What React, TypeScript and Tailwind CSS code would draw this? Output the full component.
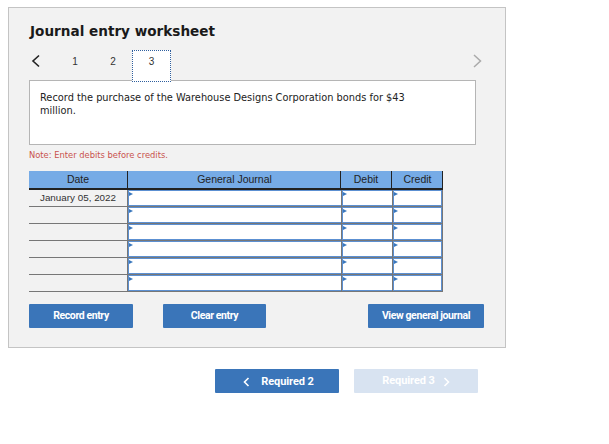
import React from "react";

const rows = [0, 1, 2, 3, 4, 5];

function InputCell({ className, last }: { className: string; last?: boolean }) {
  return (
    <div className={`h-[17px] bg-white border-b border-b-[#777] border-l border-l-[#777] ${last ? "border-r border-r-[#777]" : ""} ${className}`}>
      <div className={`relative h-full border-y border-l border-[#5c90d2] ${last ? "border-r" : ""}`}>
        <span className="absolute left-0 top-[1px] w-0 h-0 border-y-[2.5px] border-y-transparent border-l-[4px] border-l-[#3a77bd]" />
      </div>
    </div>
  );
}

function Btn({ w, ml, children }: { w: string; ml?: string; children: React.ReactNode }) {
  return (
    <button className={`${w} ${ml ?? ""} h-6 rounded-[1px] bg-[#3a75b9] text-white text-[10.5px] font-bold font-['Roboto',sans-serif] tracking-[-0.4px]`}>
      {children}
    </button>
  );
}

export default function App() {
  return (
    <div className="w-[609px] h-[444px] bg-white overflow-hidden">
      <div className="ml-2 mt-[7px] w-[498px] h-[341px] border border-[#c4c4c4] bg-[#f2f2f2] pl-5 pr-[29px] pt-[14px] font-['DejaVu_Sans',sans-serif]">
        <h1 className="ml-px text-[13.6px] leading-[18px] font-bold text-[#1a1a1a]">Journal entry worksheet</h1>
        <div className="flex items-start h-[30px] mt-[10px]">
          <svg width="10" height="14" viewBox="0 0 10 14" className="ml-[2px] mt-[4px]" fill="none" stroke="#222" strokeWidth="1.6">
            <path d="M8 1.5 2 7l6 5.5" />
          </svg>
          <span className="ml-[29px] mt-[6px] w-[10px] text-center text-[10px] leading-3 text-[#333] font-['Liberation_Sans',sans-serif]">1</span>
          <span className="ml-[28px] mt-[6px] w-[10px] text-center text-[10px] leading-3 text-[#333] font-['Liberation_Sans',sans-serif]">2</span>
          <span className="ml-[14px] w-[39px] h-[32px] border border-dotted border-[#2f5f9e] bg-white text-center text-[10px] leading-[22px] text-[#333] font-['Liberation_Sans',sans-serif] relative z-10">3</span>
          <svg width="10" height="14" viewBox="0 0 10 14" className="ml-auto mt-[4px] mr-[-6px]" fill="none" stroke="#aaa" strokeWidth="1.5">
            <path d="M2 1 8.5 7 2 13" />
          </svg>
        </div>
        <div className="w-[447px] h-[65px] border border-[#b5b5b5] bg-white pl-[10px] pr-[60px] pt-[10px] text-[9.8px] leading-[13px] text-[#222]">
          Record the purchase of the Warehouse Designs Corporation bonds for $43 million.
        </div>
        <p className="mt-[4px] text-[8.35px] leading-3 text-[#c9524e]">Note: Enter debits before credits.</p>
        <div className="mt-[10px] w-[414px] font-['Liberation_Sans',sans-serif]">
          <div className="flex h-[19px] bg-[#76abe6] border-b-[2px] border-[#222] text-[10.5px] leading-[16px] text-[#222] text-center">
            <div className="w-[99px] border-r border-[#222]">Date</div>
            <div className="w-[213px] pl-px border-r border-[#222]">General Journal</div>
            <div className="w-[51px] border-r border-[#222]">Debit</div>
            <div className="w-[51px] pl-px border-r border-[#222]">Credit</div>
          </div>
          {rows.map((r) => (
            <div key={r} className="flex h-[17px]">
              <div className="w-[98px] h-[17px] border-b border-[#777] text-center text-[9.85px] leading-[15px] text-[#333]">
                {r === 0 ? "January 05, 2022" : ""}
              </div>
              <InputCell className="w-[214px]" />
              <InputCell className="w-[51px]" />
              <InputCell className="w-[51px]" last />
            </div>
          ))}
        </div>
        <div className="flex mt-3 w-[455px]">
          <Btn w="w-[104px]">Record entry</Btn>
          <Btn w="w-[103px]" ml="ml-[30px]">Clear entry</Btn>
          <Btn w="w-[116px]" ml="ml-auto">View general journal</Btn>
        </div>
      </div>
      <div className="flex ml-[215px] mt-[21px] gap-[15px] font-['Roboto',sans-serif] text-[11px] font-bold tracking-[-0.1px]">
        <button className="w-[124px] h-6 pt-[2px] pl-[3px] rounded-[1px] bg-[#3a75b9] text-white flex items-center justify-center gap-[11px]">
          <svg width="7" height="10" viewBox="0 0 7 10" fill="none" stroke="#fff" strokeWidth="1.6"><path d="M5.5 1 1.5 5l4 4" /></svg>
          Required 2
        </button>
        <button className="w-[124px] h-6 pt-px rounded-[1px] bg-[#d8e3f1] text-white flex items-center justify-center gap-[8px]">
          Required 3
          <svg width="7" height="10" viewBox="0 0 7 10" fill="none" stroke="#fff" strokeWidth="1.6"><path d="M1.5 1l4 4-4 4" /></svg>
        </button>
      </div>
    </div>
  );
}
